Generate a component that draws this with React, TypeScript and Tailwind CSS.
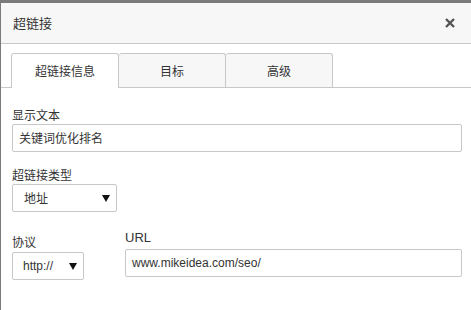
import React from 'react';

const cjk = "font-['Noto_Sans_CJK_SC','Liberation_Sans',sans-serif]";
const latin = "font-['Liberation_Sans','Noto_Sans_CJK_SC',sans-serif]";

const Arrow = () => (
    <svg width="8" height="7" viewBox="0 0 8 7" className="shrink-0">
        <path d="M0 0 H8 L4 7 Z" fill="#111" />
    </svg>
);

const App: React.FC = () => {
    return (
        <div className="w-[471px] h-[310px] overflow-hidden bg-[#7b7b7b] pt-[3px] pl-px">
            <div className="h-full w-[480px] bg-white text-[#333] text-[12px]">
                {/* 标题栏 */}
                <div className="h-[41px] bg-[#f7f7f7] border-b border-[#c8c8c8] flex items-center justify-between pl-[12px] pr-[26px]">
                    <span className={`${cjk} text-[13px] text-[#333]`}>超链接</span>
                    <svg width="10" height="10" viewBox="0 0 10 10">
                        <path d="M1 1 L9 9 M9 1 L1 9" stroke="#555" strokeWidth="2.4" />
                    </svg>
                </div>

                {/* 选项卡 */}
                <div className="mt-[9px] flex pl-[10px] border-b border-[#c8c8c8] h-[35px]">
                    <div className={`${cjk} w-[108px] h-[35px] border border-b-0 border-[#c8c8c8] rounded-t-[3px] bg-white flex items-center justify-center`}>
                        超链接信息
                    </div>
                    <div className={`${cjk} w-[107px] h-[34px] border border-l-0 border-b-0 border-[#c8c8c8] rounded-t-[3px] bg-[#f7f7f7] flex items-center justify-center`}>
                        目标
                    </div>
                    <div className={`${cjk} w-[107px] h-[34px] border border-l-0 border-b-0 border-[#c8c8c8] rounded-t-[3px] bg-[#f7f7f7] flex items-center justify-center`}>
                        高级
                    </div>
                </div>

                <div className="pl-[11px] w-[461px]">
                    {/* 显示文本 */}
                    <div className="mt-[18px]">
                        <p className={`${cjk} leading-[18px]`}>显示文本</p>
                        <div className={`${cjk} h-[28px] border border-[#c8c8c8] rounded-[2px] flex items-center pl-[6px]`}>
                            关键词优化排名
                        </div>
                    </div>

                    {/* 超链接类型 */}
                    <div className="mt-[14px]">
                        <p className={`${cjk} leading-[18px]`}>超链接类型</p>
                        <div className="w-[105px] h-[28px] border border-[#c8c8c8] rounded-[2px] flex items-center justify-between pl-[11px] pr-[6px]">
                            <span className={cjk}>地址</span>
                            <Arrow />
                        </div>
                    </div>

                    {/* 协议 / URL */}
                    <div className="mt-[17px] flex gap-[41px]">
                        <div>
                            <p className={`${cjk} leading-[18px] mt-[4px]`}>协议</p>
                            <div className="mt-[1px] w-[72px] h-[28px] border border-[#c8c8c8] rounded-[2px] flex items-center justify-between pl-[10px] pr-[6px]">
                                <span className={`${latin} text-[12px]`}>http://</span>
                                <Arrow />
                            </div>
                        </div>
                        <div className="flex-1">
                            <p className={`${latin} leading-[18px] text-[13px]`}>URL</p>
                            <div className={`${latin} mt-[2px] h-[28px] border border-[#c8c8c8] rounded-[2px] flex items-center pl-[6px] text-[12px]`}>
                                www.mikeidea.com/seo/
                            </div>
                        </div>
                    </div>
                </div>
            </div>
        </div>
    );
};

export default App;
